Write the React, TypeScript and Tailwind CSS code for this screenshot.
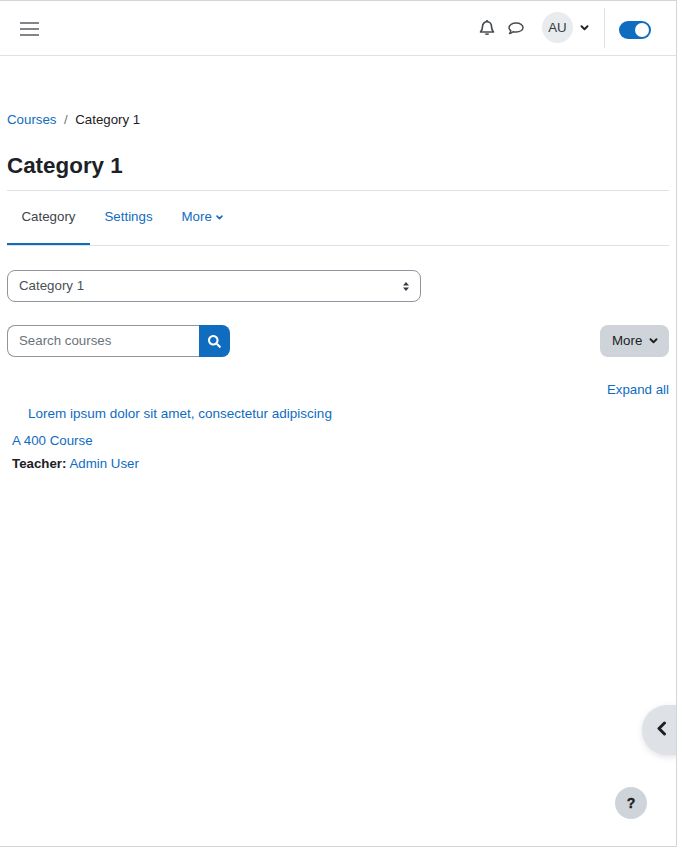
import { FaSearch } from "react-icons/fa";

const Chevron = ({ className }: { className: string }) => (
  <svg viewBox="0 0 10 7" className={className} fill="none" stroke="currentColor" strokeWidth="2.2" strokeLinecap="round" strokeLinejoin="round">
    <path d="M1.5 1.500 5 5l3.500-3.500" />
  </svg>
);

export default function App() {
  return (
    <div className="relative flex h-[847px] w-[677px] flex-col overflow-hidden border-y border-r border-[#d5d5d5] bg-white font-['Liberation_Sans',sans-serif] text-[13.3px] leading-[20px] text-[#1d2125]">
      <header className="flex h-[55px] shrink-0 items-center border-b border-[#dee2e6] pl-5 pr-[25px]">
        <svg width="20" height="16" viewBox="0 0 20 16" className="mt-[1px] text-[#5a5e63]" stroke="currentColor" strokeWidth="1.6">
          <path d="M0 2h19M0 8h19M0 14h19" />
        </svg>
        <div className="ml-auto flex items-center">
          <svg width="16" height="17" viewBox="0 0 16 17" fill="none" stroke="#4a4d50" strokeWidth="1.7" strokeLinejoin="round" className="mb-[2px]">
            <path d="M1.500 13h13c-1.300-1.300-2-2.400-2-5.500 0-2.700-2-4.800-4.500-4.800S3.500 4.800 3.500 7.500c0 3.100-.7 4.200-2 5.500Z" />
            <path d="M8 1v1.500M6.500 14.500c.3 1 2.700 1 3 0" />
          </svg>
          <svg width="16" height="15" viewBox="0 0 16 15" fill="none" stroke="#4a4d50" strokeWidth="1.5" strokeLinejoin="round" className="ml-[13px]">
            <path d="M8.200 2C4.300 2 1 4 1 6.700c0 1.200.7 2.300 1.800 3-.1 1.100-.6 2-1.300 2.800 1.500-.2 2.700-.8 3.500-1.700 1 .2 2.100.3 3.200.2 3.800-.2 6.800-2.100 6.800-4.500S12.100 2 8.200 2Z" />
          </svg>
          <div className="mb-[2px] ml-[18px] flex h-[31px] w-[31px] items-center justify-center rounded-full bg-[#e9ecef] pt-[1px] text-[#343a40]">AU</div>
          <Chevron className="ml-[7px] h-[6px] w-[9px] text-[#1d2125]" />
          <div className="ml-[15px] h-10 w-px bg-[#dee2e6]" />
          <div className="ml-[14px] mt-[3px] flex h-[18px] w-8 items-center justify-end rounded-full bg-[#0f6cbf] pr-[2px]">
            <div className="h-[14px] w-[14px] rounded-full bg-white" />
          </div>
        </div>
      </header>

      <main className="flex flex-col px-[7px]">
        <nav className="mt-[54px] flex items-center">
          <a className="text-[#0f6cbf]">Courses</a>
          <span className="mx-[7.500px] text-[#6a737b]">/</span>
          <span>Category 1</span>
        </nav>

        <h1 className="mt-[22px] text-[22.400px] font-bold leading-[27px] text-[#1d2125]">Category 1</h1>

        <div className="mt-[11px] border-t border-[#dee2e6]" />

        <div className="flex h-[55px] border-b border-[#dee2e6] pb-[3px]">
          <div className="-mb-[3px] flex w-[83px] items-center justify-center border-b-2 border-[#0f6cbf] text-[#404449]">Category</div>
          <a className="ml-[14.500px] flex items-center text-[#0f6cbf]">Settings</a>
          <a className="ml-[29px] flex items-center text-[#0f6cbf]">
            More
            <Chevron className="ml-[3px] mt-[2px] h-[5px] w-[9px]" />
          </a>
        </div>

        <div className="mt-[24px] flex h-8 w-[414px] items-center justify-between rounded-lg border border-[#8f959e] pl-[11px] pr-[10px] text-[#495057]">
          <span>Category 1</span>
          <svg width="8" height="11" viewBox="0 0 8 11" fill="#343a40">
            <path d="M4 1 7 4.500H1ZM4 10 1 6.500H7Z" />
          </svg>
        </div>

        <div className="mt-[23px] flex items-center justify-between">
          <div className="flex h-8 w-[223px]">
            <div className="flex flex-1 items-center rounded-l-lg border border-r-0 border-[#8f959e] pl-[11px] text-[#6a737b]">Search courses</div>
            <div className="flex w-[31px] items-center justify-center rounded-r-lg bg-[#0f6cbf] text-white">
              <FaSearch size={13} />
            </div>
          </div>
          <div className="flex h-8 w-[69px] items-center rounded-lg bg-[#ced4da] pl-3 text-[#1d2125]">
            More
            <Chevron className="ml-[7px] h-[6px] w-[9px]" />
          </div>
        </div>

        <a className="mt-[23px] self-end text-[#0f6cbf]">Expand all</a>
        <a className="ml-[21px] mt-[4px] text-[13.5px] text-[#0f6cbf]">Lorem ipsum dolor sit amet, consectetur adipiscing</a>
        <a className="ml-[5px] mt-[7px] text-[#0f6cbf]">A 400 Course</a>
        <div className="ml-[5px] mt-[3px]">
          <span className="font-bold">Teacher:</span> <a className="text-[#0f6cbf]">Admin User</a>
        </div>
      </main>

      <div className="absolute right-[-1px] top-[704px] flex h-[50px] w-[35px] items-center rounded-l-full bg-[#dee2e6] pb-[3px] pl-[14px] shadow-[0_2px_6px_rgba(0,0,0,0.12)]">
        <svg width="11" height="15" viewBox="0 0 11 15" fill="none" stroke="#1d2125" strokeWidth="3" strokeLinecap="round" strokeLinejoin="round">
          <path d="M8.500 2 3 7.500 8.500 13" />
        </svg>
      </div>
      <div className="absolute left-[615px] top-[786px] flex h-8 w-8 items-center justify-center rounded-full bg-[#ced4da] text-[14px] font-bold text-[#1d2125] [-webkit-text-stroke:0.4px]">?</div>
    </div>
  );
}
